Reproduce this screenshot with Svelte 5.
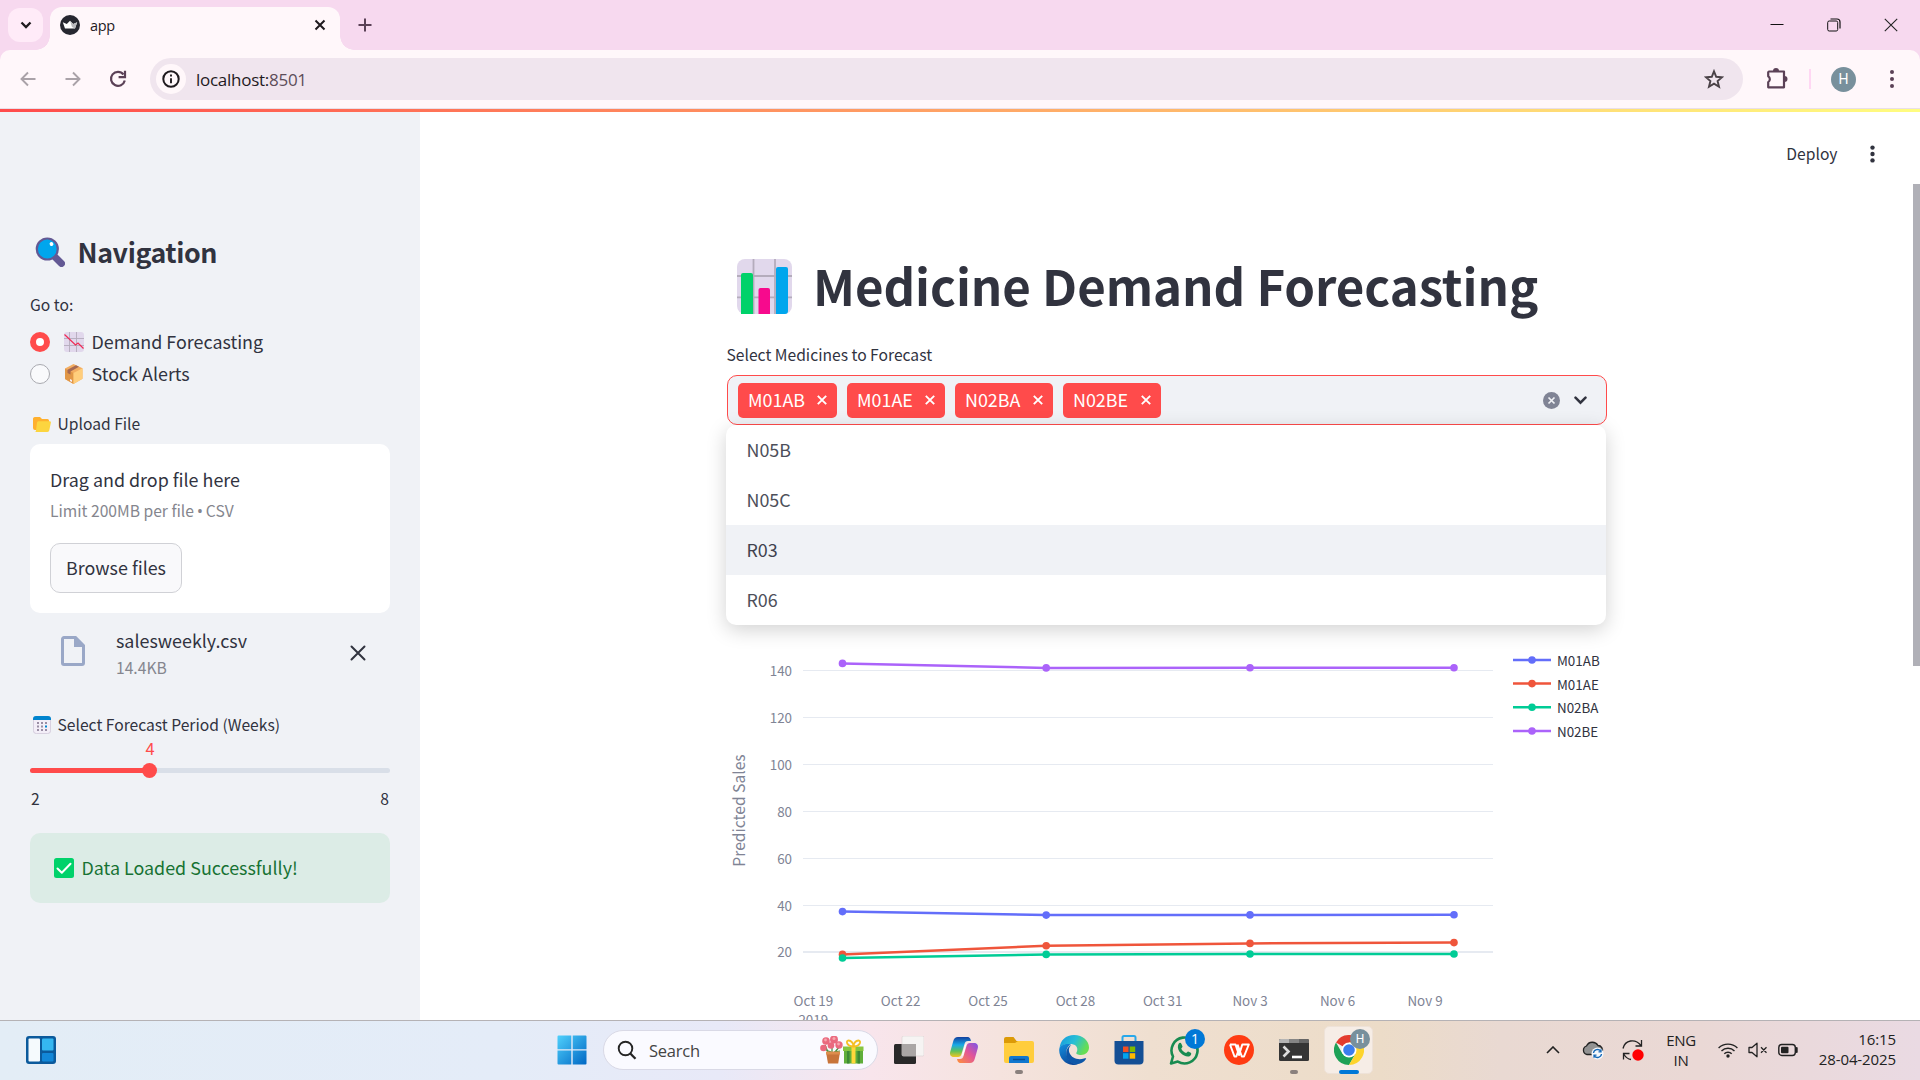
<script>
  const tags = ['M01AB', 'M01AE', 'N02BA', 'N02BE'];
  const options = ['N05B', 'N05C', 'R03', 'R06'];
  const hovered = 'R03';
  const ticksY = [
    [140, 670.5], [120, 717.5], [100, 764.5], [80, 811.5], [60, 858.5], [40, 905.5]
  ];
  const ticksX = [
    ['Oct 19', 813.3], ['Oct 22', 900.6], ['Oct 25', 988], ['Oct 28', 1075.4],
    ['Oct 31', 1162.7], ['Nov 3', 1250], ['Nov 6', 1337.5], ['Nov 9', 1425]
  ];
  const xs = [842.5, 1046.2, 1250, 1454];
  const series = [
    { name: 'M01AB', color: '#636efa', ys: [911.6, 915.1, 914.9, 914.8], ly: 660, ty: 666 },
    { name: 'M01AE', color: '#ef553b', ys: [954.4, 945.8, 943.4, 942.6], ly: 683.6, ty: 690 },
    { name: 'N02BA', color: '#00cc96', ys: [958, 954.4, 954, 954], ly: 707.3, ty: 713 },
    { name: 'N02BE', color: '#ab63fa', ys: [663.4, 667.9, 667.7, 667.7], ly: 731, ty: 737 }
  ];
  const line = (ys) => ys.map((y, i) => `${xs[i]},${y}`).join(' ');
</script>

<div class="screen">
  <!-- Browser tab strip -->
  <header class="tabstrip">
    <div class="tabsearch">
      <svg width="12" height="8" viewBox="0 0 12 8"><path d="M1.5 1.5 6 6l4.500-4.500" fill="none" stroke="#1f1a1e" stroke-width="2.300" /></svg>
    </div>
    <div class="tab">
      <svg width="20" height="20" viewBox="0 0 20 20"><circle cx="10" cy="10" r="10" fill="#262730" /><path d="M2.800 7.200 6.800 9 10 5.800l3.200 3.200 4-1.800-2.200 6.300H5z" fill="#fff" /><path d="M10 5.800 13.200 9l4-1.800-2.200 6.300-3-1.500z" fill="#b9b9bd" /></svg>
      <span class="tabtitle">app</span>
      <svg width="12" height="12" viewBox="0 0 12 12"><path d="M1.500 1.500l9 9m0-9-9 9" stroke="#1f1a1e" stroke-width="2" /></svg>
    </div>
    <svg class="newtab" width="14" height="14" viewBox="0 0 14 14"><path d="M7 .5v13M.5 7h13" stroke="#5b4156" stroke-width="2" /></svg>
    <div class="winctl">
      <svg width="14" height="14" viewBox="0 0 14 14"><path d="M.5 6.500h13" stroke="#111" /></svg>
      <svg width="14" height="14" viewBox="0 0 14 14"><rect x=".7" y="3" width="10" height="10" rx="1.500" fill="none" stroke="#111" /><path d="M3.500 1h6.500a3 3 0 0 1 3 3v6.500" fill="none" stroke="#111" stroke-width="1.200" /></svg>
      <svg width="14" height="14" viewBox="0 0 14 14"><path d="M.8.8l12.400 12.400m0-12.400L.8 13.200" stroke="#222" stroke-width="1.100" /></svg>
    </div>
  </header>

  <!-- Address bar -->
  <div class="toolbarwrap">
    <div class="toolbar">
      <svg class="back" width="16" height="16" viewBox="0 0 16 16"><path d="M15.500 8H2M8 1.500 1.500 8 8 14.500" fill="none" stroke="#aaa2a8" stroke-width="1.900" /></svg>
      <svg class="fwd" width="16" height="16" viewBox="0 0 16 16"><path d="M.5 8H14M8 1.500 14.500 8 8 14.500" fill="none" stroke="#aaa2a8" stroke-width="1.900" /></svg>
      <svg class="reload" width="18" height="18" viewBox="0 0 18 18"><path d="M14.500 4.500A7 7 0 1 0 15.800 10.500" fill="none" stroke="#5b4156" stroke-width="2.200" /><path d="M16 .8v6.400H9.600" fill="none" stroke="#5b4156" stroke-width="2.200" /></svg>
      <div class="omnibox">
        <div class="info">
          <svg width="18" height="18" viewBox="0 0 18 18"><circle cx="9" cy="9" r="7.700" fill="none" stroke="#1f1a1e" stroke-width="2" /><path d="M9 8.200v5M9 4.600v2" stroke="#1f1a1e" stroke-width="1.900" /></svg>
        </div>
        <span class="url">localhost:<em>8501</em></span>
        <svg class="star" width="20" height="20" viewBox="0 0 20 20"><path d="m10 2.300 2.200 5.500 5.900.4-4.500 3.800 1.400 5.700-5-3.100-5 3.100L6.400 12 1.900 8.200l5.900-.4z" fill="none" stroke="#4a4247" stroke-width="1.900" /></svg>
      </div>
      <svg class="ext" width="22" height="22" viewBox="0 0 22 22"><path d="M3 3.500h15v15.800H2.200v-5.100a3.500 3.500 0 0 0 0-5.900V4.300z" fill="none" stroke="#5b4156" stroke-width="2.200" stroke-linejoin="round" /><path d="M7 3a3 3 0 0 1 6 0zM18.500 8a3 3 0 0 1 0 6z" fill="#5b4156" /></svg>
      <i class="sep"></i>
      <div class="avatar">H</div>
      <svg class="dots" width="4" height="18" viewBox="0 0 4 18"><g fill="#5b4156"><circle cx="2" cy="2" r="2" /><circle cx="2" cy="9" r="2" /><circle cx="2" cy="16" r="2" /></g></svg>
    </div>
  </div>
  <div class="decor"></div>

  <div class="page">
    <!-- Sidebar -->
    <aside class="sidebar">
      <div class="navhead">
        <svg width="30" height="30" viewBox="0 0 30 30"><path d="m18 18 8.500 8.500" stroke="#635994" stroke-width="7" stroke-linecap="round" /><circle cx="12.300" cy="12" r="10.500" fill="#00a6ed" stroke="#635994" stroke-width="2.200" /><ellipse cx="16.500" cy="7" rx="1.800" ry="2.100" transform="rotate(-30 16.500 7)" fill="#fff" /></svg>
        <h2>Navigation</h2>
      </div>
      <div class="goto small">Go to:</div>
      <div class="radio">
        <i class="knob on"></i>
        <svg width="20" height="20" viewBox="0 0 20 20"><rect width="20" height="20" rx="3" fill="#e1d8ec" /><path d="M5.500 0v20M12.500 0v20M0 6.500h20M0 13.500h20" stroke="#b4acbc" stroke-width=".9" /><path d="M.5 2.500 11.500 13l2.500-2 5.500 5.500" fill="none" stroke="#f02a55" stroke-width="1.200" /></svg>
        <span>Demand Forecasting</span>
      </div>
      <div class="radio">
        <i class="knob"></i>
        <svg width="20" height="20" viewBox="0 0 20 20"><path d="m9.500 0 9 4.300v10.500l-9 5.200-8.500-5V4.500z" fill="#f3ad61" /><path d="M1 4.500 9.500 9v11L1 15z" fill="#e19747" /><path d="m9.500 9 9-4.700v10.500l-9 5.200z" fill="#ffce7c" /><path d="m3.500 5.800 8.500-4.500 3 1.400L6.500 7.400v3.200l-3-1.500z" fill="#a56953" /><path d="m6 15 2 1v2l-2-1z" fill="#f3eef8" /></svg>
        <span>Stock Alerts</span>
      </div>
      <div class="lbl upload small">
        <svg width="18" height="18" viewBox="0 0 18 18"><path d="M0 3.500A1.800 1.800 0 0 1 1.800 2H7l2 2h5.500a1.500 1.500 0 0 1 1.500 1.500V15H2a2 2 0 0 1-2-2z" fill="#ffb02e" /><path d="M5.300 6.300h11.200a1.300 1.300 0 0 1 1.300 1.700l-1.500 7.300A2 2 0 0 1 14.400 17H1.500A1.500 1.500 0 0 0 3 15.500l1-7.700a1.500 1.500 0 0 1 1.300-1.500z" fill="#fcd53f" /></svg>
        <span>Upload File</span>
      </div>
      <section class="drop">
        <div class="d1">Drag and drop file here</div>
        <div class="d2 small">Limit 200MB per file <span class="bullet">•</span> CSV</div>
        <button>Browse files</button>
      </section>
      <div class="file">
        <svg class="doc" width="24" height="30" viewBox="0 0 24 30"><path d="M3 1.500h11.500l8 8V27a1.500 1.500 0 0 1-1.500 1.500H3A1.500 1.500 0 0 1 1.500 27V3A1.500 1.500 0 0 1 3 1.500z" fill="none" stroke="#9aa8c7" stroke-width="3" /><path d="M13 1v10h10z" fill="#9aa8c7" /></svg>
        <div class="meta"><div class="fname">salesweekly.csv</div><div class="fsize small">14.4KB</div></div>
        <svg class="remove" width="16" height="16" viewBox="0 0 16 16"><path d="m1.500 1.500 13 13m0-13-13 13" stroke="#31333f" stroke-width="2" stroke-linecap="round" /></svg>
      </div>
      <div class="lbl period small">
        <svg width="18" height="18" viewBox="0 0 18 18"><rect x=".4" y=".4" width="17.200" height="17.200" rx="3" fill="#f3eef8" stroke="#cdc4d6" stroke-width=".8" /><path d="M0 4V3a3 3 0 0 1 3-3h12a3 3 0 0 1 3 3v1z" fill="#0084ce" /><g fill="#998ea4"><path d="M4 6h2v2H4zm4 0h2v2H8zm4 0h2v2h-2zM4 9.500h2v2H4zm4 0h2v2H8zM4 13h2v2H4zm4 0h2v2H8zm4 0h2v2h-2z" /></g><path d="M12 9.500h2v2h-2z" fill="#0084ce" /></svg>
        <span>Select Forecast Period (Weeks)</span>
      </div>
      <div class="value">4</div>
      <div class="track"><div class="fill"><i></i></div></div>
      <div class="range small"><span>2</span><span>8</span></div>
      <div class="success">
        <svg width="20" height="20" viewBox="0 0 20 20"><rect width="20" height="20" rx="2.500" fill="#00d26a" /><path d="m3.500 10.500 4.300 4.200 8.700-8.900" fill="none" stroke="#fff" stroke-width="2" stroke-linecap="round" stroke-linejoin="round" /></svg>
        <span>Data Loaded Successfully!</span>
      </div>
    </aside>

    <!-- Main -->
    <main>
      <div class="apphead">
        <span>Deploy</span>
        <svg width="5" height="18" viewBox="0 0 5 18"><g fill="#31333f"><circle cx="2.500" cy="2.600" r="2.200" /><circle cx="2.500" cy="9" r="2.200" /><circle cx="2.500" cy="15.400" r="2.200" /></g></svg>
      </div>
      <div class="content">
        <div class="title">
          <svg width="55" height="55" viewBox="0 0 55 55"><rect width="55" height="55" rx="8" fill="#e1d8ec" /><path d="M16.500 0v55M38 0v55M0 17h55M0 38.300h55" stroke="#b4acbc" stroke-width="1.800" /><path d="M4 55V16a2 2 0 0 1 2-2h8a2 2 0 0 1 2 2v39z" fill="#00d26a" /><path d="M21.500 55V31a2 2 0 0 1 2-2H31a2 2 0 0 1 2 2v24z" fill="#f70a8d" /><path d="M39 55V10a2 2 0 0 1 2-2h8a2 2 0 0 1 2 2v42a3 3 0 0 1-3 3z" fill="#00a6ed" /></svg>
          <h1>Medicine Demand Forecasting</h1>
        </div>
        <div class="sellabel small">Select Medicines to Forecast</div>
        <div class="select">
          {#each tags as t}
            <span class="tag"><span>{t}</span><svg width="10" height="10" viewBox="0 0 10 10"><path d="m.8.8 8.400 8.400m0-8.400L.8 9.200" stroke="#fff" stroke-width="1.900" /></svg></span>
          {/each}
          <svg class="clear" width="17" height="17" viewBox="0 0 17 17"><circle cx="8.500" cy="8.500" r="8.500" fill="#808495" /><path d="m5.500 5.500 6 6m0-6-6 6" stroke="#f0f2f6" stroke-width="1.700" /></svg>
          <svg width="13" height="9" viewBox="0 0 13 9"><path d="m1.500 1.700 5 5 5-5" fill="none" stroke="#31333f" stroke-width="2.500" stroke-linecap="round" /></svg>
          <ul class="menu">
            {#each options as o}
              <li class:hover={o === hovered}>{o}</li>
            {/each}
          </ul>
        </div>
        <svg class="chart" width="900" height="420" viewBox="727 625 900 420">
          {#each ticksY as [v, y]}
            <line x1="803" x2="1493" y1={y} y2={y} stroke="#e6eaf1" />
            <text class="tick" x="792" y={y + 5.5} text-anchor="end">{v}</text>
          {/each}
          <line x1="803" x2="1493" y1="952" y2="952" stroke="#e6eaf1" stroke-width="2" />
          <text class="tick" x="792" y="957" text-anchor="end">20</text>
          {#each ticksX as [t, x]}
            <text class="tick" {x} y="1006" text-anchor="middle">{t}</text>
          {/each}
          <text class="tick" x="813.3" y="1025" text-anchor="middle">2019</text>
          <text class="axis" transform="translate(744.500 810.500) rotate(-90)" text-anchor="middle">Predicted Sales</text>
          {#each series as s}
            <polyline points={line(s.ys)} fill="none" stroke={s.color} stroke-width="2.500" />
            {#each s.ys as y, i}
              <circle cx={xs[i]} cy={y} r="3.800" fill={s.color} />
            {/each}
            <line x1="1513" x2="1551" y1={s.ly} y2={s.ly} stroke={s.color} stroke-width="2.500" />
            <circle cx="1532" cy={s.ly} r="3.800" fill={s.color} />
            <text class="leg" x="1557" y={s.ty}>{s.name}</text>
          {/each}
        </svg>
      </div>
      <i class="scroll"></i>
    </main>
  </div>

  <!-- Taskbar -->
  <footer class="taskbar">
    <div class="widgets">
      <svg width="30" height="28" viewBox="0 0 30 28"><rect width="30" height="28" rx="3" fill="#0b5a9c" /><rect x="2.500" y="2.500" width="11.500" height="23" rx="1" fill="#f5fafd" /><rect x="16" y="2.500" width="11.500" height="12" rx="1" fill="#35b7f1" /><rect x="16" y="17" width="11.500" height="8.500" rx="1" fill="#1287d8" /></svg>
    </div>
    <div class="cells">
      <div class="cell start">
        <svg width="30" height="30" viewBox="0 0 30 30"><defs><linearGradient id="win" x1="0" y1="0" x2="1" y2="1"><stop offset="0" stop-color="#4fd0fc" /><stop offset="1" stop-color="#0067c4" /></linearGradient></defs><path d="M1.500.5H14.300v13.700H.5V1.500a1 1 0 0 1 1-1zM15.700.5h12.800a1 1 0 0 1 1 1v12.700H15.700zM.5 15.500h13.800v14H1.500a1 1 0 0 1-1-1zM15.700 15.500h13.800v13a1 1 0 0 1-1 1H15.700z" fill="url(#win)" /></svg>
      </div>
      <div class="search">
        <svg width="20" height="20" viewBox="0 0 20 20"><circle cx="8.500" cy="8.500" r="6.800" fill="none" stroke="#252525" stroke-width="1.900" /><path d="m13.300 13.500 5.200 5.200" stroke="#252525" stroke-width="2.300" /></svg>
        <span>Search</span>
        <svg class="gift" width="44" height="28" viewBox="0 0 44 28"><path d="M8 16 5 9m7 8V7m3 9 5-6M11 16 6 14M14 16l6-1" stroke="#3c8f3a" stroke-width="1.200" /><g fill="#ea6a7f"><circle cx="6" cy="5" r="3.800" /><circle cx="14" cy="3.500" r="4" /><circle cx="19" cy="9" r="3.700" /><circle cx="3.500" cy="12" r="3.300" /><circle cx="11" cy="9.500" r="3.300" /></g><g fill="#f7a6ae"><circle cx="5.500" cy="4" r="1.400" /><circle cx="14" cy="2.500" r="1.500" /><circle cx="18.500" cy="8" r="1.400" /></g><path d="M6 16h14l-1.800 11.500H8z" fill="#c8743a" /><path d="M6 15.500h14v3H6z" fill="#dd8d4d" /><path d="M24 14h19v13.500H24z" fill="#5fae3a" /><path d="M23 10.500h20.500V15H23z" fill="#87c540" /><path d="M27 15h2.500v12.500H27zm10.500 0H40v12.500h-2.500z" fill="#3d8a36" /><path d="M31.500 10.500h4v17h-4z" fill="#ffd83b" /><path d="M33.500 10.500c-7 0-8-6-5-6s5 3 5 6c0-3 2-6 5-6s2 6-5 6z" fill="none" stroke="#f5bf24" stroke-width="1.800" /></svg>
      </div>
      <div class="cell">
        <svg width="30" height="28" viewBox="0 0 30 28"><rect y="8" width="22" height="20" rx="1.500" fill="#292929" /><rect x="8" width="22" height="20" rx="1.500" fill="#f6f4f3" stroke="#dcd5d5" stroke-width=".7" /><path d="M8 8h14v12H8z" fill="#aaa6a5" /></svg>
      </div>
      <div class="cell">
        <svg width="30" height="28" viewBox="0 0 30 28"><defs><linearGradient id="cpa" x1="0" y1="0" x2="0" y2="1"><stop offset="0" stop-color="#123f9e" /><stop offset=".4" stop-color="#19a9e8" /><stop offset=".7" stop-color="#5dc15b" /><stop offset="1" stop-color="#f4c520" /></linearGradient><linearGradient id="cpb" x1="1" y1="0" x2="0" y2="1"><stop offset="0" stop-color="#7a56e8" /><stop offset=".45" stop-color="#e1549b" /><stop offset="1" stop-color="#ff9138" /></linearGradient></defs><path d="M9 1h9c3 0 3.500 2 4 4h-3c-2 0-3 1-3.500 3l-3 10c-.6 2-1.500 3-3.500 3H5c-3.500 0-4.600-2.500-3.700-5.500l3-10.500C5 2.500 6.500 1 9 1z" fill="url(#cpa)" /><path d="M21 27h-9c-3 0-3.500-2-4-4h3c2 0 3-1 3.500-3l3-10c.6-2 1.500-3 3.500-3h4c3.500 0 4.600 2.500 3.700 5.500l-3 10.500C25 25.500 23.500 27 21 27z" fill="url(#cpb)" /><path d="m13 19 3-10 1.500-1.500L14 20z" fill="#fff" /></svg>
      </div>
      <div class="cell run">
        <svg width="30" height="28" viewBox="0 0 30 28"><path d="M0 3a2 2 0 0 1 2-2h7.500l3 4H28v8H0z" fill="#dc9a07" /><path d="M0 7h11l3-2h14a2 2 0 0 1 2 2v18a2 2 0 0 1-2 2H2a2 2 0 0 1-2-2z" fill="#ffcd3d" /><path d="M5 27v-5a2 2 0 0 1 2-2h16a2 2 0 0 1 2 2v5z" fill="#1177cf" /><path d="M9 23.500h12" stroke="#0b4e93" stroke-width="1.400" /></svg>
      </div>
      <div class="cell">
        <svg width="30" height="30" viewBox="0 0 30 30"><defs><linearGradient id="ea" x1="0" y1="0" x2="1" y2=".4"><stop offset="0" stop-color="#1697e0" /><stop offset=".55" stop-color="#28bfd5" /><stop offset="1" stop-color="#66dd54" /></linearGradient><linearGradient id="eb" x1="0" y1="0" x2=".5" y2="1"><stop offset="0" stop-color="#1490df" /><stop offset="1" stop-color="#0c4a9c" /></linearGradient></defs><path d="M.5 14C1 5 7 0 15 0c9 0 15 6 15 12.500 0 4.500-3.500 7.500-8 7.500-3 0-5.500-1-4.500-2.500 2-3 .5-8-5-8.500C6.500 8.700 1.500 10 .5 14z" fill="url(#ea)" /><path d="M.2 15C.2 10.500 6 8 12 9.500c-3.500 1.500-5 5-4.500 9C8 24.500 13 29 19 29.300 9 32.500 0 24.500.2 15z" fill="url(#eb)" /><path d="M12.500 10c-2.500 1.500-3.300 5-2 8 2 5 8.500 7.500 14.500 5.500 1.500-.5 2.500-.5 2 .5-4.500 7.500-17 7-19.500-3-1-5 1-9.500 5-11z" fill="#0d57a8" /></svg>
      </div>
      <div class="cell">
        <svg width="30" height="30" viewBox="0 0 30 30"><path d="M8.500 7V2.500a1.500 1.500 0 0 1 1.500-1.500h10a1.500 1.500 0 0 1 1.500 1.500V7" fill="none" stroke="#28a8ea" stroke-width="2" /><path d="M.5 6h29v19.500a4 4 0 0 1-4 4h-21a4 4 0 0 1-4-4z" fill="#144f95" /><path d="M9 11.500h5.500V17H9z" fill="#f25022" /><path d="M15.700 11.500h5.500V17h-5.500z" fill="#7fba00" /><path d="M9 18.200h5.500v5.500H9z" fill="#00a4ef" /><path d="M15.700 18.200h5.500v5.500h-5.500z" fill="#ffb900" /></svg>
      </div>
      <div class="cell">
        <svg width="30" height="30" viewBox="0 0 30 30"><path d="M2 28.500 4 21.500A13 13 0 1 1 8.800 26.600z" fill="none" stroke="#188b50" stroke-width="2.600" stroke-linejoin="round" /><path d="M9.500 9c1-1.700 2.500-1.300 3 0l1 2.500c.2.700-1.300 1.700-1.200 2.300 1 2 2.500 3.400 4.700 4.200.7 0 1.500-1.700 2.200-1.500l2.600 1.300c1 .6.200 2.400-.8 3.100-4 2.600-13.500-3.900-12-10.400z" fill="#188b50" /></svg>
        <b class="badge">1</b>
      </div>
      <div class="cell">
        <svg width="30" height="30" viewBox="0 0 30 30"><circle cx="15" cy="15" r="15" fill="#ff3b12" /><path d="M6 9.500h5.500L15 20l3.300-10.500H24.800L20 21.500h-2.200L13.500 9.500M6 9.500l4.500 12h1.800L15 14" fill="none" stroke="#fff" stroke-width="2" stroke-linejoin="round" /></svg>
      </div>
      <div class="cell run">
        <svg width="30" height="30" viewBox="0 0 30 30"><rect y="4" width="30" height="22" rx="1.500" fill="#353535" /><path d="M0 8V5.500A1.500 1.500 0 0 1 1.500 4H10v4z" fill="#b5b5b5" /><path d="M10 4h10v4H10z" fill="#858585" /><path d="M20 4h8.500A1.500 1.500 0 0 1 30 5.500V8H20z" fill="#666" /><path d="m4.500 11.500 5 5-5 5" fill="none" stroke="#ddd" stroke-width="2.600" /><path d="M13 22h10" stroke="#fff" stroke-width="2.600" /></svg>
      </div>
      <div class="cell active">
        <svg width="30" height="30" viewBox="0 0 30 30"><path d="M15 15 2 7.500A15 15 0 0 1 28 7.500H15z" fill="#e33b2e" /><path d="M15 15 8.500 18.800 2 7.500A15 15 0 0 0 15 30l6.500-11.200z" fill="#1da156" /><path d="M15 7.500h13A15 15 0 0 1 15 30l6.500-11.200z" fill="#fdd42c" /><circle cx="15" cy="15" r="7.500" fill="#fff" /><circle cx="15" cy="15" r="5.800" fill="#3b7ded" /></svg>
        <b class="prof">H</b>
      </div>
    </div>
    <div class="tray">
      <svg width="14" height="8" viewBox="0 0 14 8"><path d="m1 7 6-6 6 6" fill="none" stroke="#222" stroke-width="1.600" /></svg>
      <svg class="cloud" width="22" height="20" viewBox="0 0 22 20"><path d="M5 14.500A4.400 4.400 0 0 1 4.500 6 6.500 6.500 0 0 1 16 5.500a4.500 4.500 0 0 1 4 6.500c-.6 1.600-2 2.500-4 2.500z" fill="#929292" stroke="#222" stroke-width="1.300" /><circle cx="15.500" cy="13.500" r="6" fill="#f5f8fc" /><path d="M11.500 13a4 4 0 0 1 7.200-1.800m.3-2v2.600h-2.500M19.500 14a4 4 0 0 1-7.200 1.800m-.3 2v-2.600h2.500" fill="none" stroke="#1669b7" stroke-width="1.300" /></svg>
      <svg class="sync" width="22" height="22" viewBox="0 0 22 22"><path d="M1 9.500C3 1 13-1 19 6.500M19.500 1v6h-6M9 20.500c-3-.5-5.500-2.500-7-5M1.500 20.500v-6h6" fill="none" stroke="#222" stroke-width="1.300" /><circle cx="16" cy="16" r="5.700" fill="#f00" /></svg>
      <div class="lang">ENG<br />IN</div>
      <svg class="wifi" width="20" height="16" viewBox="0 0 20 16"><g fill="none" stroke="#222" stroke-width="1.400"><path d="M.6 6a13.300 13.300 0 0 1 18.800 0M3.500 9a9.200 9.200 0 0 1 13 0M6.300 11.800a5.200 5.200 0 0 1 7.400 0" /></g><circle cx="10" cy="14" r="1.700" fill="#222" /></svg>
      <svg class="vol" width="20" height="16" viewBox="0 0 20 16"><path d="M1 5.500h3L9 1.200v13.600L4 10.500H1zM13 5.300l5.500 5.500m0-5.500L13 10.800" fill="none" stroke="#222" stroke-width="1.300" stroke-linejoin="round" /></svg>
      <svg class="bat" width="21" height="14" viewBox="0 0 21 14"><rect x=".8" y="1.500" width="16.500" height="11" rx="3" fill="none" stroke="#222" stroke-width="1.400" /><rect x="3" y="3.700" width="7.500" height="6.600" rx="1" fill="#222" /><path d="M18.700 5v4" stroke="#222" stroke-width="2" stroke-linecap="round" /></svg>
      <div class="clock">16:15<br />28-04-2025</div>
    </div>
  </footer>
</div>

<style>
  :global(body) { margin: 0; overflow: hidden; }
  .screen {
    width: 1920px; height: 1080px; display: flex; flex-direction: column; overflow: hidden;
    background: #fff; color: #31333f; font: 17.9px/24px "Noto Sans CJK SC", sans-serif;
  }
  .screen * { box-sizing: border-box; }
  svg { display: block; flex: none; }
  .small { font-size: 15.65px; }

  .tabstrip { height: 50px; flex: none; display: flex; align-items: center; background: #f7d9ef; padding-left: 8px; }
  .tabsearch { width: 35px; height: 34px; border-radius: 12px; background: #ffebf8; display: grid; place-items: center; }
  .tab {
    position: relative; width: 290px; height: 43px; margin: 7px 0 0 7px; padding: 0 14px 7px 10px; border-radius: 12px 12px 0 0;
    background: #fff7fa; display: flex; align-items: center;
  }
  .tab::before, .tab::after { content: ""; position: absolute; bottom: 0; width: 14px; height: 14px; }
  .tab::before { left: -14px; background: radial-gradient(circle at 0 0, transparent 13.5px, #fff7fa 14px); }
  .tab::after { right: -14px; background: radial-gradient(circle at 100% 0, transparent 13.5px, #fff7fa 14px); }
  .tabtitle { flex: 1; margin-left: 10px; padding-top: 2px; font: 14.5px/20px "Open Sans", sans-serif; letter-spacing: -0.3px; color: #1f1a1e; }
  .newtab { margin-left: 18px; }
  .winctl { margin-left: auto; display: flex; gap: 43px; padding-right: 22px; }

  .toolbarwrap { height: 59px; flex: none; background: #f7d9ef; }
  .toolbar { height: 59px; border-bottom: 1px solid #e9dfe8; border-radius: 10px 10px 0 0; background: #fff7fa; display: flex; align-items: center; padding-left: 20px; }
  .fwd { margin-left: 29px; }
  .reload { margin-left: 28px; }
  .omnibox { width: 1593px; height: 42px; margin-left: 23px; border-radius: 21px; background: #f0e5ee; display: flex; align-items: center; padding: 0 19px 0 6px; }
  .info { width: 30px; height: 30px; border-radius: 50%; background: #fff7fa; display: grid; place-items: center; }
  .url { margin-left: 10px; padding-top: 2px; flex: 1; font: 17px/24px "Open Sans", sans-serif; letter-spacing: -0.27px; color: #1f1a1e; }
  .url em { font-style: normal; color: #5d4d59; }
  .ext { margin-left: 23px; }
  .sep { width: 2px; height: 20px; margin-left: 21px; background: #ffd7f3; }
  .avatar { width: 25px; height: 25px; margin-left: 20px; border-radius: 50%; background: #78909c; color: #fff; font: 14px/25px Roboto, sans-serif; text-align: center; }
  .dots { margin-left: 34px; }
  .decor { height: 3px; flex: none; background: linear-gradient(90deg, #ff4b4b, #fffd80); }

  .page { height: 908px; flex: none; display: flex; overflow: hidden; }
  .sidebar { width: 420px; flex: none; background: #f0f2f6; padding: 120px 30px 0; display: flex; flex-direction: column; }
  .navhead { height: 40px; display: flex; align-items: center; padding-left: 5px; gap: 12.500px; }
  h1, h2 { margin: 0; }
  h2 { font-size: 26.8px; line-height: 40px; font-weight: 600; letter-spacing: -0.4px; }
  .goto { height: 24px; margin-top: 21px; }
  .radio { height: 32px; display: flex; align-items: center; }
  .goto + .radio { margin-top: 9px; }
  .radio svg { margin: 0 7.500px 0 14px; }
  .radio span { height: 26px; }
  .knob { width: 20px; height: 20px; border-radius: 50%; background: #f9fafc; border: 1px solid #a9aab0; }
  .knob.on { border: 6px solid #ff4b4b; background: #fff; }
  .lbl { height: 24px; display: flex; align-items: center; gap: 6.500px; padding-left: 3px; }
  .upload { margin-top: 22px; }
  .drop { height: 169px; margin-top: 8px; border-radius: 10px; background: #fff; padding: 23px 20px 0; }
  .d2 { margin-top: 8px; color: #85868e; }
  .bullet { font: 15.65px/20px "Noto Sans", sans-serif; margin: 0 -0.500px; }
  button {
    display: block; width: 132px; height: 50px; margin-top: 20px; padding: 0 0 2px; border: 1px solid #d0d1d6; border-radius: 10px;
    background: #f9f9fb; color: #31333f; font: inherit;
  }
  .file { height: 60px; margin-top: 10px; display: flex; align-items: center; padding: 0 24.500px 0 31px; }
  .meta { margin-left: 31px; padding-top: 2px; flex: 1; }
  .fsize { margin-top: 4px; color: #85868e; }
  .doc { margin-top: -4px; }
  .remove { margin-top: -1px; }
  .period { margin-top: 30px; }
  .value { height: 24px; margin-top: -1px; width: 240px; text-align: center; color: #ff4b4b; font-size: 16.500px; }
  .track { height: 5px; margin-top: 8px; border-radius: 3px; background: #d9dfe8; }
  .fill { position: relative; width: 120px; height: 5px; border-radius: 3px; background: #ff4b4b; }
  .fill i { position: absolute; right: -7px; top: -5px; width: 15px; height: 15px; border-radius: 50%; background: #ff4b4b; }
  .range { height: 24px; margin-top: 14px; padding: 0 1px; display: flex; justify-content: space-between; }
  .success { height: 70px; margin-top: 22px; border-radius: 10px; background: #dcece6; color: #177233; display: flex; align-items: center; gap: 7.500px; padding-left: 24px; }
  .success span { height: 26px; }

  main { position: relative; flex: 1; min-width: 0; background: #fff; }
  .apphead { height: 84px; display: flex; align-items: center; justify-content: flex-end; padding-right: 45px; gap: 32.500px; font-size: 15.65px; }
  .content { width: 880px; margin-left: 307px; padding-top: 48px; }
  .title { height: 82px; display: flex; align-items: center; gap: 21px; padding-left: 10px; }
  .title svg { margin-top: 2px; }
  h1 { font-size: 49.2px; line-height: 80px; font-weight: 700; letter-spacing: -0.03px; white-space: nowrap; }
  .sellabel { height: 24px; margin-top: 17px; text-indent: -0.500px; }
  .select {
    position: relative; height: 50px; margin-top: 8px; border: 1px solid #ff4b4b; border-radius: 10px; background: #f0f2f6;
    display: flex; align-items: center; gap: 10px; padding: 0 19px 0 10px;
  }
  .tag { height: 35px; display: flex; align-items: center; justify-content: space-between; width: 98px; padding: 0 10px; border-radius: 5px; background: #ff4b4b; color: #fff; white-space: nowrap; }
  .tag span { height: 26px; }
  .tag:first-child { width: 99px; }
  .clear { margin-left: auto; margin-right: 4px; }
  .menu {
    position: absolute; left: -2px; top: 49px; width: 880px; margin: 0; padding: 0; list-style: none; border-radius: 10px;
    background: #fff; overflow: hidden; box-shadow: 0 5px 20px rgba(0, 0, 0, 0.18);
  }
  .menu li { height: 50px; line-height: 48px; padding-left: 20.500px; color: #4d4f5a; }
  .menu li.hover { background: #f0f2f6; color: #40424e; }
  .chart { margin-top: 200px; }
  .tick { font-size: 13.4px; fill: #808495; }
  .axis { font-size: 15.65px; fill: #808495; }
  .leg { font-size: 13.4px; fill: #31333f; }
  .scroll { position: absolute; right: 0; top: 72px; width: 7px; height: 482px; background: #b0b0b7; }

  .taskbar {
    height: 60px; flex: none; display: flex; align-items: center; border-top: 1px solid #b5b2b5; padding-bottom: 1px; color: #222;
    font: 15px/20px "Open Sans", sans-serif;
    background: linear-gradient(90deg, #e3edf6 0, #e4ecf8 500px, #e8e9f8 720px, #f8e5ec 870px, #f5e3de 1000px, #efdfd0 1150px, #ecdcc8 1380px, #e9d9d2 1500px, #ead8d5 1700px, #eadae3 1920px);
  }
  .widgets { width: 545px; padding-left: 26px; }
  .cells { display: flex; align-items: center; height: 58px; }
  .cell { position: relative; width: 55px; height: 48px; display: grid; place-items: center; }
  .start { padding-right: 1px; }
  .search { width: 275px; height: 40px; margin: 0 3px; border: 1px solid #d9d9e6; border-radius: 20px; background: #fafaff; display: flex; align-items: center; padding: 0 13px 0 13px; font-size: 16.500px; }
  .search span { flex: 1; margin-left: 12px; padding-top: 2px; letter-spacing: -0.25px; color: #444; }
  .run::after { content: ""; position: absolute; bottom: 0; left: 23.500px; width: 8px; height: 4px; border-radius: 2px; background: #8a807d; }
  .active::before { content: ""; position: absolute; inset: 0 3px; border-radius: 5px; background: #f6ede6; border: 1px solid #eee2d8; }
  .active svg { position: relative; }
  .active::after { content: ""; position: absolute; bottom: 0; left: 17.500px; width: 20px; height: 4px; border-radius: 2px; background: #0078d7; }
  .badge, .prof { position: absolute; left: 29px; top: 3px; width: 20px; height: 20px; border-radius: 50%; background: #0078d7; color: #fff; font: 14px/20px "Open Sans", sans-serif; text-align: center; }
  .prof { background: #78909c; font: 12px/20px Roboto, sans-serif; }
  .tray { margin-left: auto; display: flex; align-items: center; padding-right: 24px; text-align: center; letter-spacing: -0.35px; }
  .cloud { margin-left: 22px; }
  .sync { margin-left: 18px; }
  .lang { width: 40px; margin-left: 17px; }
  .wifi { margin-left: 17px; }
  .vol { margin-left: 10px; }
  .bat { margin-left: 10px; }
  .clock { width: 97px; text-align: right; letter-spacing: -0.1px; padding-bottom: 3px; }
</style>
